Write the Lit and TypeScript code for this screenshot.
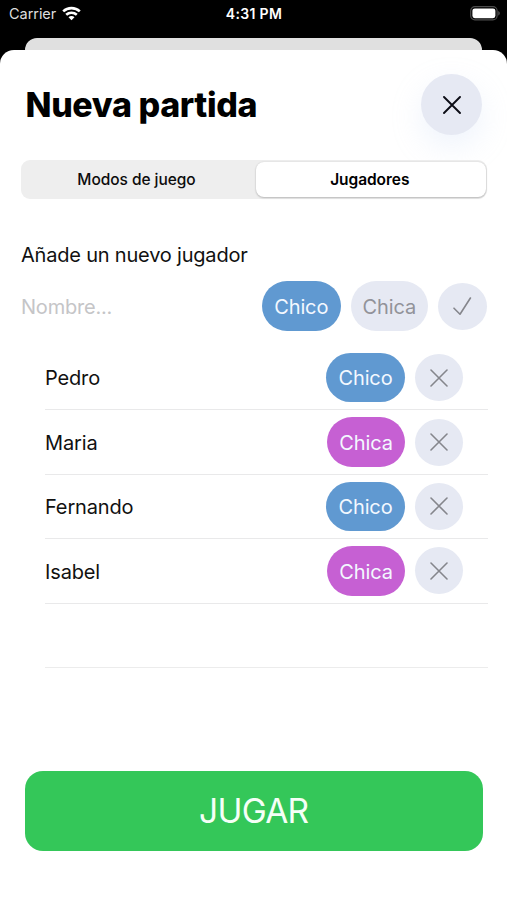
import { LitElement, html, css, svg } from "lit";
import { customElement, property, state } from "lit/decorators.js";
import { classMap } from "lit/directives/class-map.js";

type Gender = "Chico" | "Chica";

interface Player {
  name: string;
  gender: Gender;
}

const cross = svg`<path d="M1 1 L17 17 M17 1 L1 17" />`;
const check = svg`<path d="M1 11.2 L7 17.2 L17.4 1" />`;

@customElement("status-bar")
class StatusBar extends LitElement {
  static styles = css`
    :host {
      display: grid;
      grid-template-columns: 1fr auto 1fr;
      align-items: center;
      height: 27px;
      box-sizing: border-box;
      padding: 0 7px 0 9px;
      color: #fff;
      font-size: 14.5px;
    }
    .carrier {
      display: flex;
      align-items: center;
      gap: 5.5px;
      color: #dedede;
      letter-spacing: -0.05px;
    }
    .time {
      font-weight: 600;
      font-size: 14px;
      letter-spacing: 0.35px;
      margin-right: 1px;
    }
    .battery {
      justify-self: end;
    }
    svg {
      display: block;
    }
  `;

  render() {
    return html`
      <div class="carrier">
        <span>Carrier</span>
        <svg width="19" height="15" viewBox="0 0 19 15" fill="none" stroke="#fff" stroke-width="2.6">
          <path d="M1.2 5.4 C5.8 1 13.2 1 17.8 5.4" />
          <path d="M4.2 8.8 C7.2 6 11.8 6 14.8 8.8" />
          <path d="M9.5 14.2 L6.5 11.2 C8.1 9.6 10.9 9.6 12.5 11.2 Z" fill="#fff" stroke="none" />
        </svg>
      </div>
      <div class="time">4:31 PM</div>
      <svg class="battery" width="30" height="15" viewBox="0 0 30 15">
        <rect x="0.7" y="0.7" width="26.4" height="13.2" rx="4.2" fill="none" stroke="#4c4c4c" stroke-width="1.2" />
        <rect x="2.4" y="2.4" width="23" height="9.8" rx="2.4" fill="#fff" />
        <path d="M28.3 5 C30.2 5.8 30.2 8.8 28.3 9.6 Z" fill="#5a5a5a" />
      </svg>
    `;
  }
}

@customElement("player-row")
class PlayerRow extends LitElement {
  @property() name = "";
  @property() gender: Gender = "Chico";

  static styles = css`
    :host {
      display: flex;
      align-items: center;
      height: 64.4px;
      box-sizing: border-box;
      padding-right: 25px;
      border-bottom: 1px solid #e9e9ea;
    }
    .name {
      flex: 1;
      font-size: 20px;
      letter-spacing: -0.15px;
      padding-top: 1.5px;
    }
    .pill {
      display: flex;
      align-items: center;
      justify-content: center;
      width: 79px;
      height: 49.5px;
      box-sizing: border-box;
      padding-top: 1.5px;
      border-radius: 25px;
      background: #6099d1;
      color: #f3f8ff;
      font-size: 20px;
      letter-spacing: -0.1px;
      margin-right: 10px;
    }
    .pill.girl {
      width: 78px;
      background: #c660d3;
    }
    .remove {
      display: flex;
      align-items: center;
      justify-content: center;
      width: 48px;
      height: 47px;
      border-radius: 50%;
      background: #e6e9f3;
      stroke: #85868c;
    }
  `;

  render() {
    return html`
      <span class="name">${this.name}</span>
      <span class=${classMap({ pill: true, girl: this.gender === "Chica" })}>${this.gender}</span>
      <span class="remove">
        <svg width="18" height="18" viewBox="0 0 18 18" fill="none" stroke-width="1.6" stroke-linecap="round">${cross}</svg>
      </span>
    `;
  }
}

@customElement("app-root")
class AppRoot extends LitElement {
  @state() private players: Player[] = [
    { name: "Pedro", gender: "Chico" },
    { name: "Maria", gender: "Chica" },
    { name: "Fernando", gender: "Chico" },
    { name: "Isabel", gender: "Chica" },
  ];

  static styles = css`
    :host {
      display: flex;
      flex-direction: column;
      height: 900px;
      overflow: hidden;
      background: #000;
      color: #111;
      font-family: Inter, "Liberation Sans", sans-serif;
    }
    .behind {
      height: 12px;
      margin: 11px 25px 0;
      border-radius: 12px 12px 0 0;
      background: #e0e0e0;
    }
    .sheet {
      flex: 1;
      display: flex;
      flex-direction: column;
      border-radius: 14px 14px 0 0;
      background: #fff;
    }
    .header {
      display: flex;
      align-items: center;
      justify-content: space-between;
      padding: 24px 25px 0;
    }
    h1 {
      margin: 0 0 0 0.5px;
      padding-top: 1px;
      color: #000;
      font-size: 34px;
      font-weight: 800;
      line-height: 1;
      letter-spacing: -0.4px;
    }
    .close {
      display: flex;
      align-items: center;
      justify-content: center;
      width: 61px;
      height: 61px;
      border-radius: 50%;
      background: #e6e9f3;
      stroke: #0c0d16;
      box-shadow: 0 12px 30px rgba(190, 212, 245, 0.25);
    }
    .tabs {
      display: flex;
      height: 38.5px;
      margin: 25px 20px 0 21px;
      border-radius: 9px;
      background: #eee;
      color: #0c0c0c;
      font-size: 15.5px;
      font-weight: 500;
    }
    .tab {
      flex: 1;
      display: flex;
      align-items: center;
      justify-content: center;
      padding-right: 2px;
      letter-spacing: -0.05px;
    }
    .tab.active {
      flex: none;
      width: 227.5px;
      margin: 2px 1.5px 2px 2px;
      border-radius: 8px;
      background: #fff;
      color: #000;
      font-weight: 600;
      box-shadow: 0 1px 2px rgba(0, 0, 0, 0.2), 0 0 2px rgba(0, 0, 0, 0.1);
    }
    .label {
      margin: 43px 21px 0;
      font-size: 20px;
      line-height: 26px;
      letter-spacing: -0.2px;
    }
    .entry {
      display: flex;
      align-items: center;
      gap: 10px;
      height: 50px;
      margin: 13.5px 20px 0 21px;
      font-size: 20px;
      letter-spacing: -0.1px;
    }
    .field {
      flex: 1;
      color: #c5c5c7;
      padding-top: 1px;
      letter-spacing: -0.2px;
    }
    .choice {
      display: flex;
      align-items: center;
      justify-content: center;
      width: 77.5px;
      height: 49.5px;
      box-sizing: border-box;
      padding-top: 1.5px;
      border-radius: 25px;
      background: #e6e9f3;
      color: #929399;
    }
    .choice.selected {
      width: 78.5px;
      background: #6099d1;
      color: #f3f8ff;
    }
    .confirm {
      display: flex;
      align-items: center;
      justify-content: center;
      width: 49px;
      height: 47px;
      border-radius: 50%;
      background: #e6e9f3;
      stroke: #85868c;
    }
    .list {
      margin: 15px 19px 0 45px;
    }
    .blank {
      height: 64px;
      box-sizing: border-box;
      border-bottom: 1px solid #ececec;
    }
    .play {
      display: flex;
      align-items: center;
      justify-content: center;
      height: 80px;
      margin: auto 24.5px 49px 25px;
      border-radius: 18px;
      background: #34c759;
      color: #f5fff7;
      font-size: 33.5px;
      font-weight: 400;
      letter-spacing: -0.7px;
    }
  `;

  render() {
    return html`
      <status-bar></status-bar>
      <div class="behind"></div>
      <main class="sheet">
        <div class="header">
          <h1>Nueva partida</h1>
          <span class="close">
            <svg width="18" height="18" viewBox="0 0 18 18" fill="none" stroke-width="1.9" stroke-linecap="round">${cross}</svg>
          </span>
        </div>
        <div class="tabs">
          <span class="tab">Modos de juego</span>
          <span class="tab active">Jugadores</span>
        </div>
        <div class="label">Añade un nuevo jugador</div>
        <div class="entry">
          <span class="field">Nombre...</span>
          <span class="choice selected">Chico</span>
          <span class="choice">Chica</span>
          <span class="confirm">
            <svg width="19" height="19" viewBox="0 0 19 19" fill="none" stroke-width="1.6" stroke-linecap="round" stroke-linejoin="round">${check}</svg>
          </span>
        </div>
        <div class="list">
          ${this.players.map((p) => html`<player-row .name=${p.name} .gender=${p.gender}></player-row>`)}
          <div class="blank"></div>
        </div>
        <div class="play">JUGAR</div>
      </main>
    `;
  }
}
